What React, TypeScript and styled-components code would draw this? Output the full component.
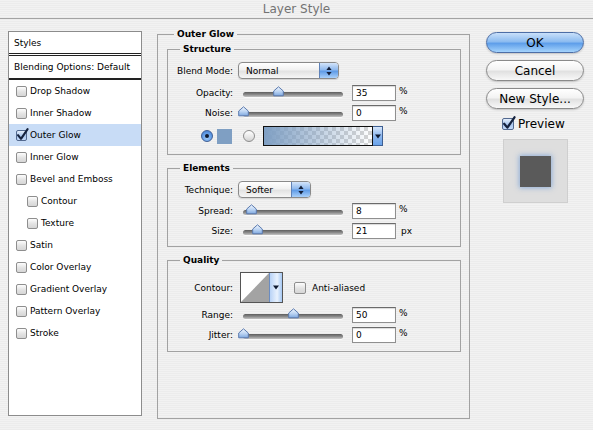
import React from "react";
import styled, { createGlobalStyle, css } from "styled-components";

const GlobalStyle = createGlobalStyle`
  html, body { margin: 0; padding: 0; }
  body {
    width: 593px;
    height: 430px;
    overflow: hidden;
    font-family: "DejaVu Sans", "Liberation Sans", sans-serif;
    font-size: 9px;
    color: #000;
    background: repeating-linear-gradient(to bottom, #f2f2f2 0, #f2f2f2 1px, #ececec 1px, #ececec 2px);
  }
`;

const Window = styled.div`
  width: 593px;
  height: 430px;
  display: flex;
  flex-direction: column;
`;

const TitleBar = styled.div`
  height: 18px;
  border-bottom: 1px solid #a3a3a3;
  display: flex;
  align-items: center;
  justify-content: center;
  font-size: 12px;
  color: #737373;
`;

const Body = styled.div`
  display: flex;
  align-items: flex-start;
  padding: 12px 0 0 8px;
`;

/* ---------- style list ---------- */

const StyleList = styled.div`
  width: 134px;
  height: 385px;
  box-sizing: border-box;
  background: #fff;
  border: 1px solid #8c8c8c;
  display: flex;
  flex-direction: column;
`;

const ListHeader = styled.div`
  height: 21px;
  padding-left: 5px;
  display: flex;
  align-items: center;
  border-bottom: 3px double #222;
`;

const BlendingRow = styled.div`
  height: 22px;
  padding-left: 5px;
  display: flex;
  align-items: center;
  border-bottom: 2px solid #222;
`;

const EffectRow = styled.div<{ $indent?: boolean; $active?: boolean }>`
  height: 22px;
  display: flex;
  align-items: center;
  gap: 3px;
  padding-left: ${(p) => (p.$indent ? 18 : 7)}px;
  background: ${(p) => (p.$active ? "#c8dcf6" : "transparent")};
`;

const BoxFrame = styled.span<{ $checked?: boolean }>`
  position: relative;
  width: 11px;
  height: 11px;
  box-sizing: border-box;
  flex: none;
  border: 1px solid #8e8e8e;
  border-radius: 2px;
  background: linear-gradient(#fdfdfd, #e2e2e2 55%, #d6d6d6);
  ${(p) =>
    p.$checked &&
    css`
      border-color: #52698f;
      background: linear-gradient(#e4eefb, #a9c6ee 55%, #c4dafa);
    `}
`;

const CheckMark = styled.svg`
  position: absolute;
  left: -1px;
  top: -3px;
  overflow: visible;
`;

function CheckBox({ checked, size = 11 }: { checked?: boolean; size?: number }) {
  return (
    <BoxFrame $checked={checked} style={{ width: size, height: size }}>
      {checked && (
        <CheckMark width={size + 2} height={size + 2} viewBox="0 0 13 13">
          <path d="M2 7.2 L5 10.8 L11.6 1.2" fill="none" stroke="#15223e" strokeWidth="2.1" strokeLinecap="round" strokeLinejoin="round" />
        </CheckMark>
      )}
    </BoxFrame>
  );
}

/* ---------- group boxes ---------- */

const OuterGroup = styled.fieldset`
  margin: -3px 0 0 15px;
  padding: 3px 8px 0 9px;
  width: 313px;
  height: 391px;
  box-sizing: border-box;
  border: 1px solid #a2a2a2;
  min-width: 0;
`;

const GroupTitle = styled.legend<{ $offset: number }>`
  padding: 0 3px;
  margin-left: ${(p) => p.$offset}px;
  font-weight: bold;
  font-size: 9px;
  line-height: 12px;
`;

const Group = styled.fieldset<{ $pad: string }>`
  margin: 0 0 7px 0;
  padding: ${(p) => p.$pad};
  width: 294px;
  box-sizing: border-box;
  border: 1px solid #a2a2a2;
  min-width: 0;
`;

const GroupBody = styled.div`
  display: flex;
  flex-direction: column;
`;

const ParamRow = styled.div<{ $h: number; $mt?: number }>`
  height: ${(p) => p.$h}px;
  margin-top: ${(p) => p.$mt ?? 0}px;
  display: flex;
  align-items: center;
`;

const ParamLabel = styled.div`
  width: 65px;
  text-align: right;
  margin-right: 5px;
  flex: none;
`;

/* popup menu */
const Popup = styled.div<{ $w: number }>`
  width: ${(p) => p.$w}px;
  height: 17px;
  box-sizing: border-box;
  border: 1px solid #8a8a8a;
  border-radius: 4px;
  background: linear-gradient(#ffffff, #f1f1f1 45%, #e2e2e2 55%, #f6f6f6);
  display: flex;
  align-items: center;
  overflow: hidden;
  box-shadow: 0 1px 1px rgba(0, 0, 0, 0.12);
`;

const PopupText = styled.span`
  flex: 1;
  padding-left: 7px;
`;

const PopupStepper = styled.span`
  width: 18px;
  height: 100%;
  border-left: 1px solid #5f82b8;
  background: linear-gradient(#d3e4fa, #8fb9ee 45%, #5f9be6 55%, #a9d0fa);
  display: flex;
  align-items: center;
  justify-content: center;
`;

function Stepper() {
  return (
    <PopupStepper>
      <svg width="6" height="10" viewBox="0 0 6 10">
        <path d="M3 0.5 L5.6 4 L0.4 4 Z M3 9.5 L5.6 6 L0.4 6 Z" fill="#14203a" />
      </svg>
    </PopupStepper>
  );
}

/* slider */
const SliderBox = styled.div`
  position: relative;
  width: 110px;
  height: 14px;
  flex: none;
  display: flex;
  align-items: center;
  padding: 0 5px;
  box-sizing: border-box;
`;

const Track = styled.div`
  width: 100%;
  height: 5px;
  margin-top: 3px;
  border-radius: 3px;
  background: linear-gradient(#5e5e5e, #8a8a8a 50%, #c4c4c4);
  box-shadow: 0 1px 0 #fafafa;
`;

const Thumb = styled.svg`
  position: absolute;
  top: 0px;
  margin-left: -5.5px;
`;

function Slider({ pos }: { pos: number }) {
  return (
    <SliderBox>
      <Track />
      <Thumb width="11" height="11" viewBox="0 0 11 11" style={{ left: 5 + pos }}>
        <defs>
          <linearGradient id="thumbFill" x1="0" y1="0" x2="0" y2="1">
            <stop offset="0" stopColor="#f2f7fe" />
            <stop offset="0.55" stopColor="#b9d2f2" />
            <stop offset="1" stopColor="#7ea8e0" />
          </linearGradient>
        </defs>
        <path d="M5.5 0.8 L10.3 5 L10.3 9.8 L0.7 9.8 L0.7 5 Z" fill="url(#thumbFill)" stroke="#5b7aae" strokeWidth="1" strokeLinejoin="round" />
      </Thumb>
    </SliderBox>
  );
}

const NumberField = styled.div`
  width: 44px;
  height: 16px;
  margin-left: 4px;
  box-sizing: border-box;
  border: 1px solid #8f8f8f;
  border-top-color: #6a6a6a;
  background: #fff;
  box-shadow: inset 0 1px 1px rgba(0, 0, 0, 0.15);
  padding-left: 3px;
  display: flex;
  align-items: center;
  flex: none;
`;

const Unit = styled.span<{ $raised?: boolean }>`
  margin-left: ${(p) => (p.$raised ? 3 : 5)}px;
  align-self: ${(p) => (p.$raised ? "flex-start" : "center")};
  margin-top: ${(p) => (p.$raised ? 3 : 0)}px;
`;

function SliderRow({ label, value, pos, unit }: { label: string; value: string; pos: number; unit: string }) {
  return (
    <ParamRow $h={20}>
      <ParamLabel>{label}</ParamLabel>
      <Slider pos={pos} />
      <NumberField>{value}</NumberField>
      <Unit $raised={unit === "%"}>{unit}</Unit>
    </ParamRow>
  );
}

const Spacer = styled.span<{ $w?: number; $h?: number }>`
  display: block;
  flex: none;
  width: ${(p) => p.$w ?? 0}px;
  height: ${(p) => p.$h ?? 0}px;
`;

/* color source row */
const Radio = styled.span<{ $on?: boolean }>`
  width: 12px;
  height: 12px;
  box-sizing: border-box;
  border-radius: 50%;
  flex: none;
  display: flex;
  align-items: center;
  justify-content: center;
  border: 1px solid ${(p) => (p.$on ? "#3f5f95" : "#8d8d8d")};
  background: ${(p) =>
    p.$on
      ? "radial-gradient(circle at 50% 70%, #9fcaf8, #5c97e3 60%, #3d74c6)"
      : "linear-gradient(#ffffff, #e6e6e6 60%, #d2d2d2)"};
  &::after {
    content: "";
    display: ${(p) => (p.$on ? "block" : "none")};
    width: 4px;
    height: 4px;
    border-radius: 50%;
    background: #0f1a30;
  }
`;

const Swatch = styled.span`
  width: 15px;
  height: 15px;
  margin-left: 4px;
  flex: none;
  background: #7f9fc3;
`;

const GradientPicker = styled.div`
  margin-left: 8px;
  height: 20px;
  display: flex;
  flex: none;
`;

const GradientStrip = styled.div`
  width: 110px;
  box-sizing: border-box;
  border: 1px solid #111;
  background:
    linear-gradient(to right, #7f9fc3, rgba(127, 159, 195, 0)),
    conic-gradient(#d4d4d4 25%, #ffffff 0 50%, #d4d4d4 0 75%, #ffffff 0) 0 0 / 8px 8px;
`;

const MenuArrow = styled.div`
  width: 9px;
  border: 1px solid #3e5f92;
  border-left: none;
  background: linear-gradient(#d6e6fb, #8db7ee 50%, #6aa3ea);
  display: flex;
  align-items: center;
  justify-content: center;
`;

function DownArrow() {
  return (
    <svg width="6" height="5" viewBox="0 0 6 5">
      <path d="M0 0.5 L6 0.5 L3 4.5 Z" fill="#0f1a30" />
    </svg>
  );
}

/* contour */
const ContourPicker = styled.div`
  margin-left: 2px;
  width: 43px;
  height: 31px;
  display: flex;
  box-sizing: border-box;
  border: 1px solid #555;
  flex: none;
`;

const ContourCurve = styled.svg`
  flex: 1;
  background: #fff;
`;

const ContourArrow = styled.div`
  width: 12px;
  border-left: 1px solid #6b8cc0;
  background: linear-gradient(to right, #b9d3f6, #e9f2fd 60%, #a6c8f3);
  display: flex;
  align-items: center;
  justify-content: center;
`;

const InlineCheck = styled.label`
  margin-left: 11px;
  display: flex;
  align-items: center;
  gap: 6px;
`;

/* ---------- right column ---------- */

const ActionColumn = styled.div`
  margin-left: 16px;
  margin-top: 1px;
  width: 98px;
  display: flex;
  flex-direction: column;
  align-items: center;
`;

const PillButton = styled.button<{ $default?: boolean }>`
  width: 98px;
  height: 21px;
  margin: 0 0 7px 0;
  padding: 0;
  border-radius: 11px;
  font-family: "DejaVu Sans", sans-serif;
  font-size: 12px;
  color: #000;
  border: 1px solid ${(p) => (p.$default ? "#4d6ea6" : "#8a8a8a")};
  background: ${(p) =>
    p.$default
      ? "linear-gradient(#c9e0fa, #8dbcf0 45%, #5f9fea 55%, #a4d3fc)"
      : "linear-gradient(#ffffff, #f3f3f3 45%, #e1e1e1 55%, #f8f8f8)"};
  box-shadow: 0 1px 2px rgba(0, 0, 0, 0.18);
`;

const PreviewToggle = styled.div`
  display: flex;
  align-items: center;
  gap: 4px;
  font-size: 12px;
  margin-top: 1px;
  align-self: flex-start;
  margin-left: 16px;
`;

const PreviewWell = styled.div`
  margin-top: 8px;
  width: 65px;
  height: 64px;
  box-sizing: border-box;
  border: 1px solid #cfcfcf;
  background: #dedede;
  display: flex;
  align-items: center;
  justify-content: center;
`;

const PreviewSwatch = styled.div`
  width: 31px;
  height: 31px;
  background: #5a5a5a;
  box-shadow: 0 0 5px 1px rgba(120, 160, 215, 0.75);
`;

const effects: { name: string; indent?: boolean; checked?: boolean }[] = [
  { name: "Drop Shadow" },
  { name: "Inner Shadow" },
  { name: "Outer Glow", checked: true },
  { name: "Inner Glow" },
  { name: "Bevel and Emboss" },
  { name: "Contour", indent: true },
  { name: "Texture", indent: true },
  { name: "Satin" },
  { name: "Color Overlay" },
  { name: "Gradient Overlay" },
  { name: "Pattern Overlay" },
  { name: "Stroke" },
];

export default function App() {
  return (
    <>
      <GlobalStyle />
      <Window>
        <TitleBar>Layer Style</TitleBar>
        <Body>
          <StyleList>
            <ListHeader>Styles</ListHeader>
            <BlendingRow>Blending Options: Default</BlendingRow>
            {effects.map((e) => (
              <EffectRow key={e.name} $indent={e.indent} $active={e.checked}>
                <CheckBox checked={e.checked} />
                <span>{e.name}</span>
              </EffectRow>
            ))}
          </StyleList>

          <OuterGroup>
            <GroupTitle $offset={7}>Outer Glow</GroupTitle>

            <Group $pad="7px 0 8px 0">
              <GroupTitle $offset={12}>Structure</GroupTitle>
              <GroupBody>
                <ParamRow $h={17}>
                  <ParamLabel>Blend Mode:</ParamLabel>
                  <Popup $w={101}>
                    <PopupText>Normal</PopupText>
                    <Stepper />
                  </Popup>
                </ParamRow>
                <Spacer $h={4} />
                <SliderRow label="Opacity:" value="35" pos={35} unit="%" />
                <SliderRow label="Noise:" value="0" pos={0} unit="%" />
                <ParamRow $h={20} $mt={3}>
                  <Spacer $w={33} />
                  <Radio $on />
                  <Swatch />
                  <Spacer $w={11} />
                  <Radio />
                  <GradientPicker>
                    <GradientStrip />
                    <MenuArrow>
                      <DownArrow />
                    </MenuArrow>
                  </GradientPicker>
                </ParamRow>
              </GroupBody>
            </Group>

            <Group $pad="7px 0 5px 0">
              <GroupTitle $offset={12}>Elements</GroupTitle>
              <GroupBody>
                <ParamRow $h={17}>
                  <ParamLabel>Technique:</ParamLabel>
                  <Popup $w={73}>
                    <PopupText>Softer</PopupText>
                    <Stepper />
                  </Popup>
                </ParamRow>
                <Spacer $h={3} />
                <SliderRow label="Spread:" value="8" pos={8} unit="%" />
                <SliderRow label="Size:" value="21" pos={14} unit="px" />
              </GroupBody>
            </Group>

            <Group $pad="6px 0 6px 0">
              <GroupTitle $offset={12}>Quality</GroupTitle>
              <GroupBody>
                <ParamRow $h={31}>
                  <ParamLabel>Contour:</ParamLabel>
                  <ContourPicker>
                    <ContourCurve viewBox="0 0 30 29" preserveAspectRatio="none">
                      <path d="M0 29 L30 0 L30 29 Z" fill="#a3a3a3" />
                    </ContourCurve>
                    <ContourArrow>
                      <DownArrow />
                    </ContourArrow>
                  </ContourPicker>
                  <InlineCheck>
                    <CheckBox size={12} />
                    <span>Anti-aliased</span>
                  </InlineCheck>
                </ParamRow>
                <Spacer $h={2} />
                <SliderRow label="Range:" value="50" pos={50} unit="%" />
                <SliderRow label="Jitter:" value="0" pos={0} unit="%" />
              </GroupBody>
            </Group>
          </OuterGroup>

          <ActionColumn>
            <PillButton $default>OK</PillButton>
            <PillButton>Cancel</PillButton>
            <PillButton>New Style...</PillButton>
            <PreviewToggle>
              <CheckBox checked size={12} />
              <span>Preview</span>
            </PreviewToggle>
            <PreviewWell>
              <PreviewSwatch />
            </PreviewWell>
          </ActionColumn>
        </Body>
      </Window>
    </>
  );
}
